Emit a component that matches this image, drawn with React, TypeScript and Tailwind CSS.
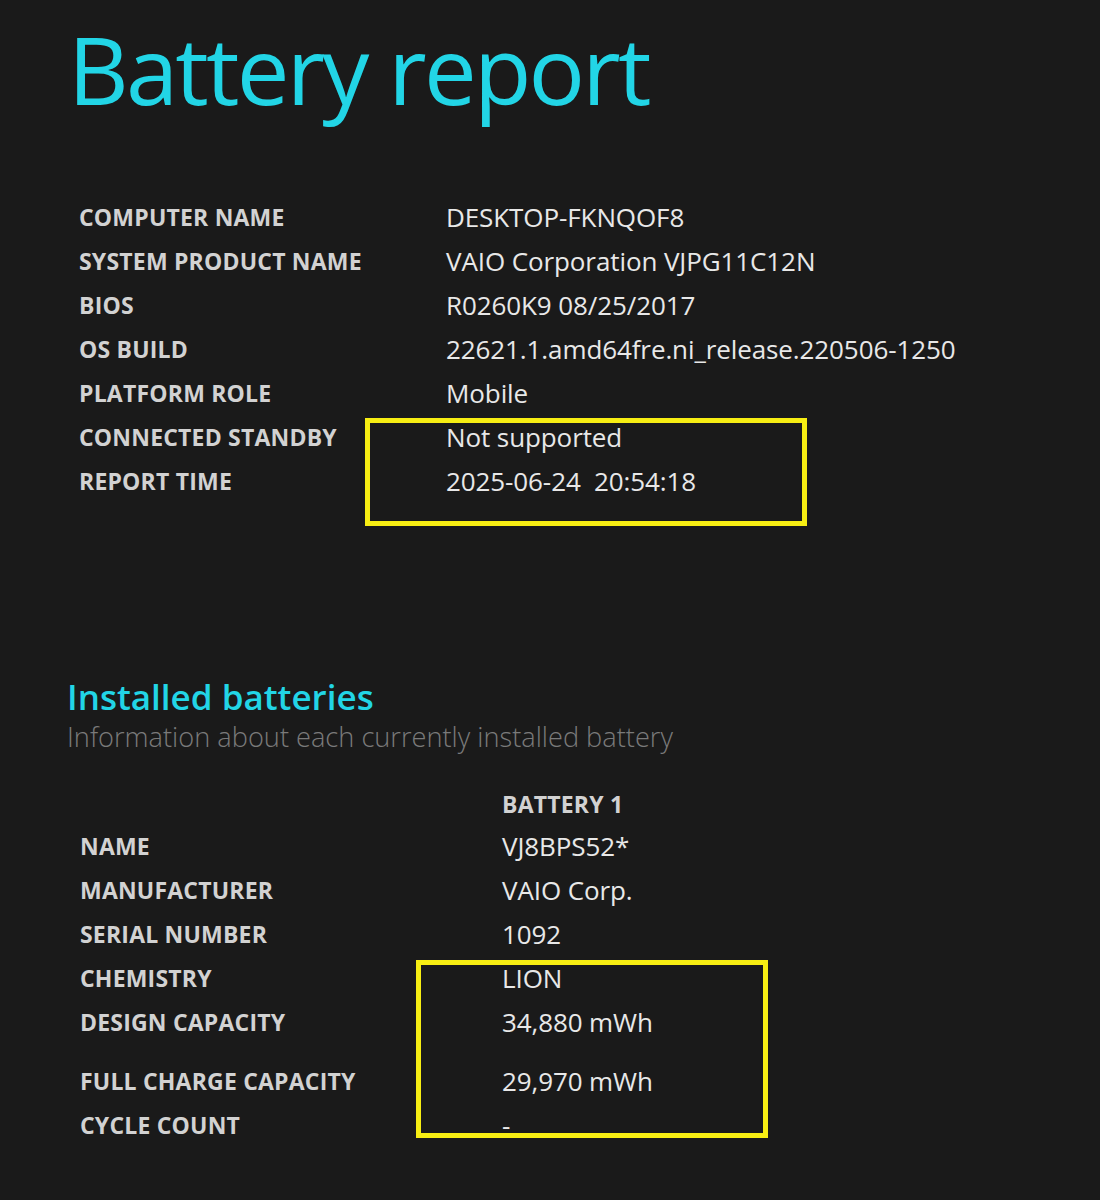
import React from 'react';

const systemRows: [string, string][] = [
  ['COMPUTER NAME', 'DESKTOP-FKNQOF8'],
  ['SYSTEM PRODUCT NAME', 'VAIO Corporation VJPG11C12N'],
  ['BIOS', 'R0260K9 08/25/2017'],
  ['OS BUILD', '22621.1.amd64fre.ni_release.220506-1250'],
  ['PLATFORM ROLE', 'Mobile'],
  ['CONNECTED STANDBY', 'Not supported'],
  ['REPORT TIME', '2025-06-24  20:54:18'],
];

const batteryRows: { label: string; value: string; gap?: boolean }[] = [
  { label: 'NAME', value: 'VJ8BPS52*' },
  { label: 'MANUFACTURER', value: 'VAIO Corp.' },
  { label: 'SERIAL NUMBER', value: '1092' },
  { label: 'CHEMISTRY', value: 'LION' },
  { label: 'DESIGN CAPACITY', value: '34,880 mWh', gap: true },
  { label: 'FULL CHARGE CAPACITY', value: '29,970 mWh' },
  { label: 'CYCLE COUNT', value: '-' },
];

const Label: React.FC<{ children: React.ReactNode }> = ({ children }) => (
  <div className="text-[23px] font-bold text-[#d2d2d2] tracking-[0.2px]">{children}</div>
);

const Value: React.FC<{ children: React.ReactNode }> = ({ children }) => (
  <div className="text-[26px] text-[#e8e8e8] tracking-[-0.1px] whitespace-pre">{children}</div>
);

const App: React.FC = () => {
  return (
    <div
      className="relative w-[1100px] h-[1200px] bg-[#1a1a1a] overflow-hidden"
      style={{ fontFamily: '"Open Sans", "Noto Sans", sans-serif' }}
    >
      <h1 className="pl-[68px] pt-[14px] text-[94px] leading-[110px] text-[#22d5e6] tracking-[-2.8px]">
        Battery report
      </h1>

      <div className="mt-[71px] pl-[79px] grid grid-cols-[367px_1fr]">
        {systemRows.map(([label, value]) => (
          <React.Fragment key={label}>
            <div className="h-[44px] flex items-center">
              <Label>{label}</Label>
            </div>
            <div className="h-[44px] flex items-center">
              <Value>{value}</Value>
            </div>
          </React.Fragment>
        ))}
      </div>

      <div className="mt-[172px] pl-[67px]">
        <h2 className="text-[35px] leading-[44px] font-semibold text-[#22d5e6]">Installed batteries</h2>
        <p className="text-[27.2px] leading-[36px] font-light text-[#7a7a7a]">
          Information about each currently installed battery
        </p>
      </div>

      <div className="mt-[29px] pl-[80px] grid grid-cols-[422px_1fr]">
        <div className="h-[40px]" />
        <div className="h-[40px] flex items-center">
          <Label>BATTERY 1</Label>
        </div>
        {batteryRows.map((row) => (
          <React.Fragment key={row.label}>
            <div className={`h-[44px] flex items-center ${row.gap ? 'mb-[15px]' : ''}`}>
              <Label>{row.label}</Label>
            </div>
            <div className={`h-[44px] flex items-center ${row.gap ? 'mb-[15px]' : ''}`}>
              <Value>{row.value}</Value>
            </div>
          </React.Fragment>
        ))}
      </div>

      {/* highlight annotations */}
      <div className="absolute left-[365px] top-[418px] w-[442px] h-[108px] border-[5px] border-[#f7ee13]" />
      <div className="absolute left-[416px] top-[960px] w-[352px] h-[178px] border-[5px] border-[#f7ee13]" />
    </div>
  );
};

export default App;
